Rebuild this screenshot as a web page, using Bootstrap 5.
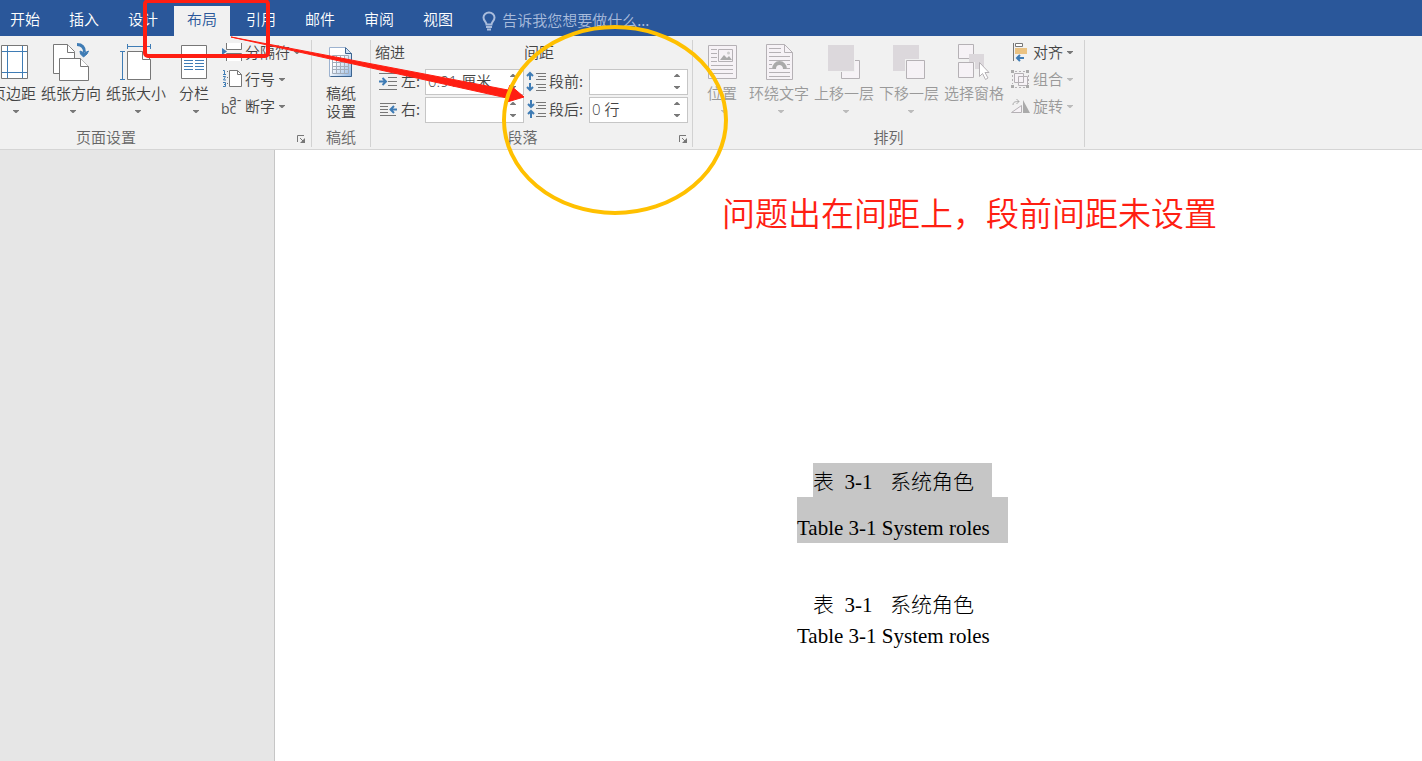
<!DOCTYPE html>
<html lang="zh-CN">
<head>
<meta charset="utf-8">
<meta name="viewport" content="width=device-width, initial-scale=1">
<title>布局</title>
<link href="https://cdn.jsdelivr.net/npm/bootstrap@5.3.0/dist/css/bootstrap.min.css" rel="stylesheet">
<script src="https://cdn.jsdelivr.net/npm/bootstrap@5.3.0/dist/js/bootstrap.bundle.min.js"></script>
<style>
  body { font: 350 15px/18px "Noto Sans CJK SC", sans-serif; color: #444; background: #fff; overflow-x: hidden; }
  button, input { font: inherit; color: inherit; }
  button { border: 0; background: none; padding: 0; white-space: nowrap; }
  svg { display: block; flex: none; }
  .title-tabs { background: #2a579a; height: 36px; padding-top: 6px; }
  .tab-list { margin-left: -3px; gap: 3px; }
  .tab-btn { color: #fff; padding: 0 13px 4px; }
  .tab-btn.active { background: #f1f1f1; color: #2a579a; }
  .tell-me { margin-left: 16px; gap: 6px; color: #a9bcdc; }
  .tell-me input { background: none; border: 0; padding: 0 0 2px; width: 160px; outline: 0; }
  .tell-me input::placeholder { color: #a9bcdc; opacity: 1; }
  .ribbon { background: #f1f1f1; border-bottom: 1px solid #d5d5d5; padding: 4px 0 2px; }
  .group { border-right: 1px solid #d2d2d2; flex: none; }
  .group-body { height: 87px; }
  .group-foot { line-height: 20px; color: #666; }
  .launcher { width: 18px; padding: 8px 0 0 4px; display: flex; align-items: flex-start; }
  .g-page { width: 321px; margin-left: -9px; }
  .g-page .group-foot { margin-left: -72px; }
  .g-paper { width: 59px; }
  .g-para { width: 322px; padding: 0 4px; }
  .g-para .launcher { padding-left: 9px; }
  .g-arrange { width: 392px; padding-left: 14px; }
  .big .drop { margin: 8px 0 0 4px; }
  .small-col { margin-top: -1px; }
  .small-btn { height: 27px; gap: 3px; padding-bottom: 2px; }
  .small-btn svg { margin-top: 2px; }
  .drop { fill: #777; }
  .small-btn .drop { margin-left: 1px; }
  .off { color: #999; }
  .off .drop { fill: #bbb; }
  .head { line-height: 24px; margin-bottom: 4px; }
  .field-row { height: 27px; margin-bottom: 1px; }
  .field-row label { padding-bottom: 2px; }
  .spin { width: 99px; background: #fff; border: 1px solid #c6c6c6; }
  .spin input { width: 77px; border: 0; padding: 0 2px 2px; background: none; outline: 0; font-family: "Open Sans", "Noto Sans CJK SC", sans-serif; }
  .spin button { width: 20px; height: 12px; display: grid; place-items: center; }
  .lab-a { width: 24px; }
  .lab-b { width: 40px; }
  .workspace { min-height: 611px; background: #e6e6e6; }
  .sheet { margin-left: 274px; border-left: 1px solid #c6c6c6; background: #fff; min-height: 611px; padding-top: 37px; color: #000; }
  .note { font-size: 33px; line-height: 50px; color: #ff1e12; margin: 0 0 226px 447px; }
  .doc { margin-left: 522px; font: 300 21px/31px "Liberation Serif", "Noto Sans CJK SC", serif; }
  .doc p { margin: 0; width: fit-content; white-space: pre; }
  .doc .cn { margin-left: 16px; }
  .doc .picked { background: #c6c6c6; padding-right: 18px; line-height: 29px; }
  .doc .cn.picked { padding-top: 5px; }
  .doc .en.picked { padding-top: 17px; margin-bottom: 47px; }
  .marks { left: 0; top: 0; pointer-events: none; }
</style>
</head>
<body>
<svg width="0" height="0" class="position-absolute" aria-hidden="true">
  <symbol id="down" viewBox="0 0 6 3"><path d="M0 0h6v.5L3.500 3h-1L0 .5z"/></symbol>
  <symbol id="up" viewBox="0 0 6 3"><path d="M0 3h6v-.5L3.500 0h-1L0 2.500z"/></symbol>
  <symbol id="launch" viewBox="0 0 9 9"><path d="M.5 7V.5H7M3 3l4 4" fill="none" stroke="#777"/><path d="M8 3v5H3z" fill="#777"/></symbol>
</svg>

<header class="title-tabs d-flex">
  <nav class="tab-list d-flex" aria-label="功能区">
    <button class="tab-btn">开始</button><button class="tab-btn">插入</button><button class="tab-btn">设计</button><button class="tab-btn active">布局</button><button class="tab-btn">引用</button><button class="tab-btn">邮件</button><button class="tab-btn">审阅</button><button class="tab-btn">视图</button>
  </nav>
  <label class="tell-me d-flex align-items-center">
    <svg width="14" height="20" viewBox="0 0 14 20" fill="none" stroke="#a9bcdc" stroke-width="2"><path d="M4.500 13.500c0-3-3-3.500-3-7a5.500 5 0 0 1 11 0c0 3.500-3 4-3 7z"/><path d="M4 16h6M5 18.500h4"/></svg>
    <input type="text" placeholder="告诉我您想要做什么..." aria-label="告诉我您想要做什么">
  </label>
</header>

<section class="ribbon d-flex">
  <div class="group g-page">
    <div class="group-body d-flex align-items-start">
      <button class="big d-flex flex-column align-items-center">
        <svg class="pic" width="39" height="44" viewBox="-6 40 39 44" fill="none"><path fill="#fff" stroke="#777" d="M1.500 45.500h26v33h-26z"/><path stroke="#3f7cb5" d="M7.500 46v32M22.500 46v32M2 51.500h25M2 72.500h25"/></svg>
        页边距<svg class="drop" width="6" height="3"><use href="#down"/></svg>
      </button>
      <button class="big d-flex flex-column align-items-center" style="margin-left:5px">
        <svg class="pic" width="40" height="44" viewBox="51 40 40 44" fill="#fff" stroke="#777"><path d="M53.500 44.500h14l7 7v22h-21z"/><path d="M67.500 44.500v8h7" /><path d="M59.500 58.500h21l8 8v14h-29z"/><path d="M80.500 58.500v8h8"/><path d="M77 44.500c5 0 7.500 3 7.500 8" fill="none" stroke="#3f7cb5" stroke-width="3"/><path d="M80 51l4.500 2 4-2-1.500 3-3.500 3-3-3z" fill="#3f7cb5" stroke="#3f7cb5"/></svg>
        纸张方向<svg class="drop" width="6" height="3"><use href="#down"/></svg>
      </button>
      <button class="big d-flex flex-column align-items-center" style="margin-left:5px">
        <svg class="pic" width="40" height="44" viewBox="116 40 40 44" fill="none"><path fill="#fff" stroke="#777" d="M127.500 51.500h15l8 8v20h-23z"/><path stroke="#777" d="M142.500 51.500v8h8"/><path stroke="#3f7cb5" d="M127.500 44v5M150.500 44v5M128 46.500h22M120 51.500h5M120 79.500h5M122.500 52v27"/></svg>
        纸张大小<svg class="drop" width="6" height="3"><use href="#down"/></svg>
      </button>
      <button class="big d-flex flex-column align-items-center" style="margin-left:13px">
        <svg class="pic" width="28" height="44" viewBox="180 40 28 44" fill="none"><path fill="#fff" stroke="#777" d="M181.500 45.500h25v33h-25z"/><path stroke="#3f7cb5" d="M184 54.500h9m2 0h9M184 57.500h9m2 0h9M184 60.500h9m2 0h9M184 63.500h9m2 0h9M184 66.500h9m2 0h9M184 69.500h9m2 0h9"/></svg>
        分栏<svg class="drop" width="6" height="3"><use href="#down"/></svg>
      </button>
      <div class="small-col" style="margin-left:13px">
        <button class="small-btn d-flex align-items-center"><svg width="20" height="21" viewBox="222 42 20 21" fill="#fff" stroke="#777"><path d="M226.500 43v6.500h15V43M226.500 61v-7.500h15V61"/><path d="M222 48l5 3.500-5 3.500z" fill="#3f7cb5" stroke="none"/></svg>分隔符<svg class="drop" width="6" height="3"><use href="#down"/></svg></button>
        <button class="small-btn d-flex align-items-center"><svg width="20" height="21" viewBox="222 69 20 21"><path d="M229.500 70.500h8l4 4v12h-12z" fill="#fff" stroke="#777"/><path d="M237.500 70.500v4h4" fill="none" stroke="#777"/><path d="M223 70.500h1.500V74M223 74.500h3M223 76.500h2.500l-2 3.500h2.500M223 82.500h2.500v2H224M225.500 84v2.500H223" fill="none" stroke="#3f7cb5"/><path d="M227 71h1v1h-1zM227 77h1v1h-1zM227 83h1v1h-1z" fill="#777"/></svg>行号<svg class="drop" width="6" height="3"><use href="#down"/></svg></button>
        <button class="small-btn d-flex align-items-center"><svg width="20" height="21" viewBox="222 96 20 21" fill="#555" overflow="visible" font-family="Open Sans, sans-serif" font-size="14" font-weight="400"><text x="221" y="114">bc</text><text x="229" y="105">a-</text></svg>断字<svg class="drop" width="6" height="3"><use href="#down"/></svg></button>
      </div>
    </div>
    <div class="group-foot d-flex"><span class="flex-fill text-center">页面设置</span><button class="launcher" aria-label="页面设置选项"><svg width="9" height="9"><use href="#launch"/></svg></button></div>
  </div>

  <div class="group g-paper">
    <div class="group-body d-flex justify-content-center align-items-start">
      <button class="big d-flex flex-column align-items-center">
        <svg class="pic" width="26" height="44" viewBox="329 40 26 44"><defs><linearGradient id="pg" x1="0" y1="0" x2="1" y2="1"><stop offset=".4" stop-color="#fff"/><stop offset="1" stop-color="#8db4e2"/></linearGradient></defs><path d="M330.500 47.500h16l6 6v23h-22z" fill="url(#pg)" stroke="#9db3d0"/><path d="M346.500 47.500l6 6v23h-21" fill="none" stroke="#3c648f"/><path d="M346.500 48v5.500h6" fill="#cfe0f4" stroke="#3c648f"/><path d="M333.500 55.500h16v18h-16zM333 59.500h17M333 62.500h17M333 66.500h17M333 69.500h17M337.500 56v17M341.500 56v17M345.500 56v17" fill="none" stroke="#a3adba"/></svg>
        <span>稿纸<br>设置</span>
      </button>
    </div>
    <div class="group-foot text-center">稿纸</div>
  </div>

  <div class="group g-para">
    <div class="group-body d-flex">
      <div>
        <div class="head">缩进</div>
        <div class="field-row d-flex align-items-center ps-1">
          <svg width="18" height="17" fill="none" stroke="#777"><path d="M0 .5h18M9 4.500h9M9 8.500h9M9 12.500h9M0 16.500h18"/><path d="M0 8.500h6M3.500 5l3.500 3.500-3.500 3.500" stroke="#3f7cb5" stroke-width="2"/></svg>
          <label class="lab-a ms-1" for="ind-l">左:</label>
          <div class="spin d-flex"><input id="ind-l" type="text" value="0.91 厘米"><div><button aria-label="增加"><svg class="drop" width="6" height="3"><use href="#up"/></svg></button><button aria-label="减少"><svg class="drop" width="6" height="3"><use href="#down"/></svg></button></div></div>
        </div>
        <div class="field-row d-flex align-items-center ps-1">
          <svg width="18" height="17" fill="none" stroke="#777"><path d="M1 2.500h16M1 5.500h8M1 8.500h8M1 11.500h8M1 14.500h16"/><path d="M18 8.500h-6M15 5l-3.500 3.500 3.500 3.500" stroke="#3f7cb5" stroke-width="2"/></svg>
          <label class="lab-a ms-1" for="ind-r">右:</label>
          <div class="spin d-flex"><input id="ind-r" type="text"><div><button aria-label="增加"><svg class="drop" width="6" height="3"><use href="#up"/></svg></button><button aria-label="减少"><svg class="drop" width="6" height="3"><use href="#down"/></svg></button></div></div>
        </div>
      </div>
      <div>
        <div class="head">间距</div>
        <div class="field-row d-flex align-items-center">
          <svg width="25" height="21" fill="none" stroke="#777"><path d="M12 2.500h10M14 5.500h8M12 8.500h10M12 13.500h10M14 16.500h8M12 19.500h10"/><path d="M6 9V2M3 5l3-3 3 3M6 12v7M3 16l3 3 3-3" stroke="#3f7cb5" stroke-width="2"/></svg>
          <label class="lab-b" for="sp-b">段前:</label>
          <div class="spin d-flex"><input id="sp-b" type="text"><div><button aria-label="增加"><svg class="drop" width="6" height="3"><use href="#up"/></svg></button><button aria-label="减少"><svg class="drop" width="6" height="3"><use href="#down"/></svg></button></div></div>
        </div>
        <div class="field-row d-flex align-items-center">
          <svg width="25" height="21" fill="none" stroke="#777"><path d="M12 3.500h10M14 6.500h8M12 9.500h10M14 14.500h8M12 17.500h10"/><path d="M7 1v7M4 5l3 3 3-3M7 19v-7M4 15l3-3 3 3" stroke="#3f7cb5" stroke-width="2"/></svg>
          <label class="lab-b" for="sp-a">段后:</label>
          <div class="spin d-flex"><input id="sp-a" type="text" value="0 行"><div><button aria-label="增加"><svg class="drop" width="6" height="3"><use href="#up"/></svg></button><button aria-label="减少"><svg class="drop" width="6" height="3"><use href="#down"/></svg></button></div></div>
        </div>
      </div>
    </div>
    <div class="group-foot d-flex"><span class="flex-fill text-center">段落</span><button class="launcher" aria-label="段落选项"><svg width="9" height="9"><use href="#launch"/></svg></button></div>
  </div>

  <div class="group g-arrange">
    <div class="group-body d-flex align-items-start">
      <button class="big off d-flex flex-column align-items-center">
        <svg class="pic" width="30" height="44" viewBox="707 40 30 44" fill="none" stroke="#b5b1b5"><path d="M708.500 45.500h28v33h-28z" fill="#f6f2f6"/><path d="M718.500 49.500h14v12h-14z"/><path d="M711 49.500h6M711 53.500h6M711 57.500h6M711 61.500h6M711 65.500h22M711 69.500h22M711 73.500h22"/><path d="M720 60l4-5 3 3 2-2 3 4z" fill="#aaa" stroke="none"/><circle cx="728.500" cy="53" r="1.500" fill="#ccc" stroke="none"/></svg>
        位置<svg class="drop" width="6" height="3"><use href="#down"/></svg>
      </button>
      <button class="big off d-flex flex-column align-items-center" style="margin-left:12px">
        <svg class="pic" width="30" height="44" viewBox="764 40 30 44" fill="none" stroke="#b5b1b5"><path d="M766.500 44.500h18l8 8v27h-26z" fill="#f6f2f6"/><path d="M784.500 44.500v8h8M769 48.500h12M769 52.500h12M769 56.500h21M769 60.500h21M769 64.500h3M787 64.500h3M769 68.500h3M787 68.500h3M769 72.500h21M769 76.500h21"/><path d="M774 69a5.500 6 0 0 1 11 0" stroke="#aaa" stroke-width="4"/></svg>
        环绕文字<svg class="drop" width="6" height="3"><use href="#down"/></svg>
      </button>
      <button class="big off d-flex flex-column align-items-center" style="margin-left:5px">
        <svg class="pic" width="34" height="44" viewBox="827 40 34 44"><path d="M841.500 60.500h18v18h-18z" fill="#f6f2f6" stroke="#b5b1b5"/><path d="M827 44h28v28h-28z" fill="#f1f1f1"/><path d="M828 45h26v26h-26z" fill="#dcd8dc"/></svg>
        上移一层<svg class="drop" width="6" height="3"><use href="#down"/></svg>
      </button>
      <button class="big off d-flex flex-column align-items-center" style="margin-left:5px">
        <svg class="pic" width="34" height="44" viewBox="892 40 34 44"><path d="M893 45h26v26h-26z" fill="#dcd8dc"/><path d="M905 59h21v21h-21z" fill="#f1f1f1"/><path d="M906.500 60.500h18v18h-18z" fill="#f6f2f6" stroke="#b5b1b5"/></svg>
        下移一层<svg class="drop" width="6" height="3"><use href="#down"/></svg>
      </button>
      <button class="big off d-flex flex-column align-items-center" style="margin-left:5px">
        <svg class="pic" width="34" height="44" viewBox="957 40 34 44" fill="#f6f2f6" stroke="#b5b1b5"><path d="M958.500 44.500h15v14h-15zM958.500 62.500h15v15h-15z"/><path d="M969 54h15v15h-9v-7h-6z" fill="#dcd8dc" stroke="none"/><path d="M979.500 62.500v14l3-3 3 6 2.500-1.500-3-5.500h4z" fill="#fff"/></svg>
        选择窗格
      </button>
      <div class="small-col" style="margin-left:7px">
        <button class="small-btn d-flex align-items-center"><svg width="19" height="21" viewBox="1011 42 19 21"><path d="M1013.500 43v18M1015.500 43.500h7v3h-7z" fill="#fff" stroke="#777"/><path d="M1015 48h12v6h-12z" fill="#eac282"/><path d="M1024 58h-7M1020 55l-3 3 3 3" fill="none" stroke="#3f7cb5" stroke-width="2"/></svg>对齐<svg class="drop" width="6" height="3"><use href="#down"/></svg></button>
        <button class="small-btn off d-flex align-items-center"><svg width="19" height="21" viewBox="1011 69 19 21" fill="none" stroke="#b5b1b5"><path d="M1014.500 73.500h9v9h-9zM1018.500 76.500h9v9h-9z" fill="#f6f2f6"/><path d="M1018.500 82.500h5v-6"/><path d="M1012.500 75v9M1015 71.500h11M1015 87.500h11M1028.500 75v9" stroke-dasharray="2 2"/><path d="M1011 70h3v3h-3zM1026 70h3v3h-3zM1011 85h3v3h-3zM1026 85h3v3h-3z" fill="#aaa" stroke="none"/></svg>组合<svg class="drop" width="6" height="3"><use href="#down"/></svg></button>
        <button class="small-btn off d-flex align-items-center"><svg width="19" height="21" viewBox="1011 96 19 21" fill="none" stroke="#b5b1b5"><path d="M1011.500 112.500h10v-7z" fill="#f6f2f6"/><path d="M1023 100v13h7z" fill="#aaa" stroke="none"/><path d="M1013 105c0-3 2-3.500 6-3.500M1016.500 99l2.500 2.500-2.500 2.500" stroke="#aaa"/></svg>旋转<svg class="drop" width="6" height="3"><use href="#down"/></svg></button>
      </div>
    </div>
    <div class="group-foot text-center" style="margin-left:-14px">排列</div>
  </div>
</section>

<main class="workspace">
  <article class="sheet">
    <p class="note">问题出在间距上，段前间距未设置</p>
    <div class="doc">
      <p class="cn picked">表  3-1&ensp;&emsp13;系统角色</p>
      <p class="en picked">Table 3-1 System roles</p>
      <p class="cn">表  3-1&ensp;&emsp13;系统角色</p>
      <p class="en">Table 3-1 System roles</p>
    </div>
  </article>
</main>

<!-- hand-drawn callouts laid over the ribbon -->
<svg class="marks position-absolute" width="740" height="220" fill="none" aria-hidden="true">
  <rect x="145" y="1" width="123" height="55" rx="3" stroke="#ff1e12" stroke-width="4"/>
  <path d="M231 37L508 90l2-5 14 12-17 5v-4z" fill="#ff1e12" stroke="#ff1e12"/>
  <ellipse cx="615" cy="120" rx="111" ry="93" stroke="#ffc000" stroke-width="4"/>
</svg>
</body>
</html>
